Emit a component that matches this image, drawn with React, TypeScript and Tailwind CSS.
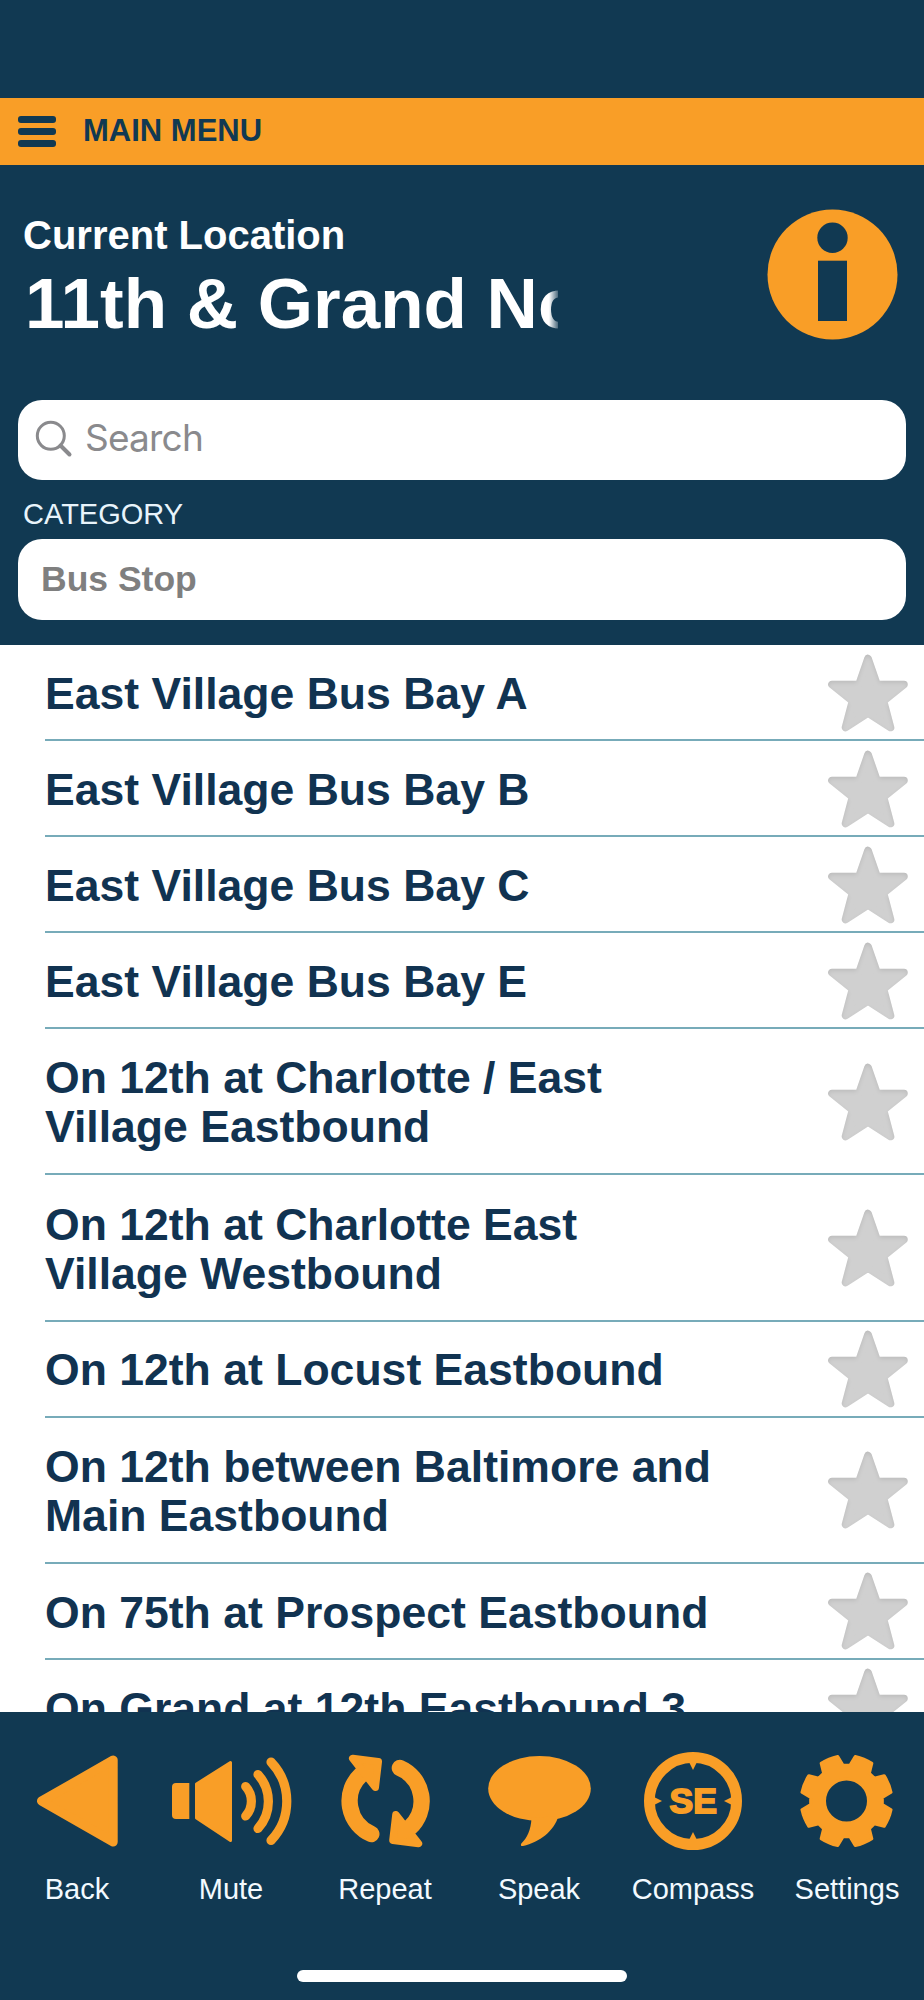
import React from "react";

const stops = [
  "East Village Bus Bay A",
  "East Village Bus Bay B",
  "East Village Bus Bay C",
  "East Village Bus Bay E",
  "On 12th at Charlotte / East Village Eastbound",
  "On 12th at Charlotte East Village Westbound",
  "On 12th at Locust Eastbound",
  "On 12th between Baltimore and Main Eastbound",
  "On 75th at Prospect Eastbound",
  "On Grand at 12th Eastbound 3",
];

// stops whose name runs over two lines get the taller row
const isTall = (name: string) => name.length > 32;

// eight teeth, with a gap at the top, the sides and the bottom
const gearPath = () => {
  const at = (deg: number, r: number) => {
    const a = (deg * Math.PI) / 180;
    return `${(76.5 + r * Math.sin(a)).toFixed(2)} ${(61 - r * Math.cos(a)).toFixed(2)}`;
  };
  let d = "";
  for (let i = 0; i < 8; i++) {
    const mid = 22.5 + i * 45;
    d += `${i === 0 ? "M" : "L"}${at(mid - 17, 36)} L${at(mid - 11.4, 45.4)} A50 50 0 0 1 ${at(mid + 11.4, 45.4)} L${at(mid + 17, 36)} `;
  }
  return d + "Z";
};

const Star = () => (
  <svg className="mt-px w-20 h-[78px] shrink-0" viewBox="0 0 80 78">
    <defs>
      <filter id="inset" x="-10%" y="-10%" width="120%" height="120%">
        <feOffset in="SourceAlpha" dx="0" dy="2" result="o" />
        <feGaussianBlur in="o" stdDeviation="2" result="b" />
        <feComposite in="SourceAlpha" in2="b" operator="out" result="edge" />
        <feFlood floodColor="#000000" floodOpacity="0.2" />
        <feComposite in2="edge" operator="in" result="shade" />
        <feMerge>
          <feMergeNode in="SourceGraphic" />
          <feMergeNode in="shade" />
        </feMerge>
      </filter>
    </defs>
    <path
      d="M40 4.5 L49 30.5 L76 30.5 L55.5 47 L62.5 73.5 L40 59 L17.5 73.5 L24.5 47 L4 30.5 L31 30.5 Z"
      fill="#d0d0d0"
      stroke="#d0d0d0"
      strokeWidth="7.6"
      strokeLinejoin="round"
      filter="url(#inset)"
    />
  </svg>
);

const BackIcon = () => (
  <path d="M41.5 61 L113.2 20 L113.2 102 Z" strokeWidth="9" strokeLinejoin="round" stroke="currentColor" />
);

const MuteIcon = () => (
  <>
    <path d="M35.3 43 H22 Q18 43 18 47 V75 Q18 79 22 79 H35.3 Z" />
    <path d="M42.5 44 L76.5 22.5 V100.5 L42.5 78 Z" stroke="currentColor" strokeWidth="3" strokeLinejoin="round" />
    <g fill="none" stroke="currentColor" strokeWidth="9.2" strokeLinecap="round">
      <path d="M91.7 46.5 A22 22 0 0 1 91.7 76" />
      <path d="M104 34.5 A40.3 40.3 0 0 1 104 88.5" />
      <path d="M117 22 A56.7 56.7 0 0 1 117 100.5" />
    </g>
  </>
);

const RepeatHalf = () => (
  <>
    <path d="M63.3 94 A36 36 0 0 1 53 34.7" fill="none" stroke="currentColor" strokeWidth="16.4" strokeLinecap="round" />
    <path d="M44.7 18.5 L70.3 21.7 L67.3 47.3 Z" stroke="currentColor" strokeWidth="7.4" strokeLinejoin="round" />
  </>
);

const RepeatIcon = () => (
  <>
    <RepeatHalf />
    <g transform="rotate(180 77.6 61)">
      <RepeatHalf />
    </g>
  </>
);

const SpeakIcon = () => (
  <>
    <ellipse cx="77.5" cy="48.5" rx="51.3" ry="32.5" />
    <path d="M69.5 78 C69 90 65 98 59.3 103.5 Q58 106.5 61 106 C78 102 92 91 96.5 76 Z" />
  </>
);

const CompassIcon = () => (
  <>
    <circle cx="77" cy="61" r="43.6" fill="none" stroke="currentColor" strokeWidth="10.8" />
    <path d="M73 22 L77 30 L81 22 Z M73 100 L77 92 L81 100 Z M38 57 L46 61 L38 65 Z M116 57 L108 61 L116 65 Z" />
    <text x="77.2" y="73.3" textAnchor="middle" fontSize="35.5" fontWeight="700" stroke="currentColor" strokeWidth="1.8">
      SE
    </text>
  </>
);

const SettingsIcon = () => (
  <path
    d={`${gearPath()} M76.5 39 A22 22 0 1 0 76.5 83 A22 22 0 1 0 76.5 39 Z`}
    fillRule="evenodd"
    stroke="currentColor"
    strokeWidth="3"
    strokeLinejoin="round"
  />
);

const tabs = [
  { label: "Back", icon: <BackIcon /> },
  { label: "Mute", icon: <MuteIcon /> },
  { label: "Repeat", icon: <RepeatIcon /> },
  { label: "Speak", icon: <SpeakIcon /> },
  { label: "Compass", icon: <CompassIcon /> },
  { label: "Settings", icon: <SettingsIcon /> },
];

const App = () => {
  return (
    <div className="w-[924px] h-[2000px] flex flex-col overflow-hidden bg-[#113952] pt-[98px] font-['Liberation_Sans',Arial,sans-serif]">
      <div className="h-[67px] shrink-0 flex items-center bg-[#f99e27] text-[#113952] pl-[18px]">
        <div className="w-[38px] flex flex-col gap-[5px]">
          <span className="h-[7px] rounded-[3px] bg-[#113952]" />
          <span className="h-[7px] rounded-[3px] bg-[#113952]" />
          <span className="h-[7px] rounded-[3px] bg-[#113952]" />
        </div>
        <p className="ml-[27px] text-[31px] font-bold">MAIN MENU</p>
      </div>

      <header className="h-[235px] shrink-0 flex justify-between pl-[23px] pr-[26px] text-white">
        <div className="w-[535px] pt-[46px]">
          <h2 className="text-[40px] leading-[48px] font-bold">Current Location</h2>
          <h1 className="mt-[5px] pl-[2px] text-[71px] leading-[80px] font-bold whitespace-nowrap overflow-hidden [mask-image:linear-gradient(to_right,black_526px,transparent_538px)]">
            11th &amp; Grand North
          </h1>
        </div>
        <svg className="mt-11 w-[131px] h-[131px]" viewBox="0 0 131 131">
          <circle cx="65.5" cy="65.5" r="65" fill="#f99e27" />
          <circle cx="65.5" cy="28.7" r="15.2" fill="#113952" />
          <rect x="51" y="51.7" width="29" height="60.3" fill="#113952" />
        </svg>
      </header>

      <section className="h-[245px] shrink-0 px-[18px]">
        <div className="h-20 flex items-center rounded-3xl bg-white text-[#8a8a8d]">
          <svg className="ml-[17px] mt-[-3px] w-[38px] h-[38px]" viewBox="0 0 38 38" fill="none" stroke="currentColor">
            <circle cx="15.8" cy="15.8" r="13.5" strokeWidth="3" />
            <path d="M25.5 25.5 L34.5 34.5" strokeWidth="4" strokeLinecap="round" />
          </svg>
          <span className="ml-[12px] mt-[-5px] text-[37px] font-['Inter',sans-serif] tracking-[-0.8px]">Search</span>
        </div>
        <p className="h-[59px] pl-[5px] text-[29px] leading-[68px] text-[#e8f4fb]">CATEGORY</p>
        <div className="h-[81px] flex items-center rounded-3xl bg-white pl-[23px] text-[35.5px] font-bold text-[#7f7f7f]">
          Bus Stop
        </div>
      </section>

      <ul className="h-[1067px] shrink-0 overflow-hidden bg-white">
        {stops.map((stop) => (
          <li key={stop} className="pl-[45px]">
            <div
              className={`${isTall(stop) ? "h-[146.3px]" : "h-24"} flex items-center justify-between border-b-2 border-[#77abb9] pr-4`}
            >
              <span className="w-[675px] pt-[2.5px] text-[44.55px] leading-[49px] font-bold text-[#113351]">{stop}</span>
              <Star />
            </div>
          </li>
        ))}
      </ul>

      <nav className="h-[258px] shrink-0 grid grid-cols-6 pt-7">
        {tabs.map((tab) => (
          <div key={tab.label} className="flex flex-col items-center">
            <svg className="w-[154px] h-[124px] text-[#f99e27]" viewBox="0 0 154 124" fill="currentColor">
              {tab.icon}
            </svg>
            <span className="mt-[5px] text-[29px] leading-[40px] text-[#f3faff]">{tab.label}</span>
          </div>
        ))}
      </nav>
      <div className="mx-auto w-[330px] h-3 shrink-0 rounded-full bg-white" />
    </div>
  );
};

export default App;
